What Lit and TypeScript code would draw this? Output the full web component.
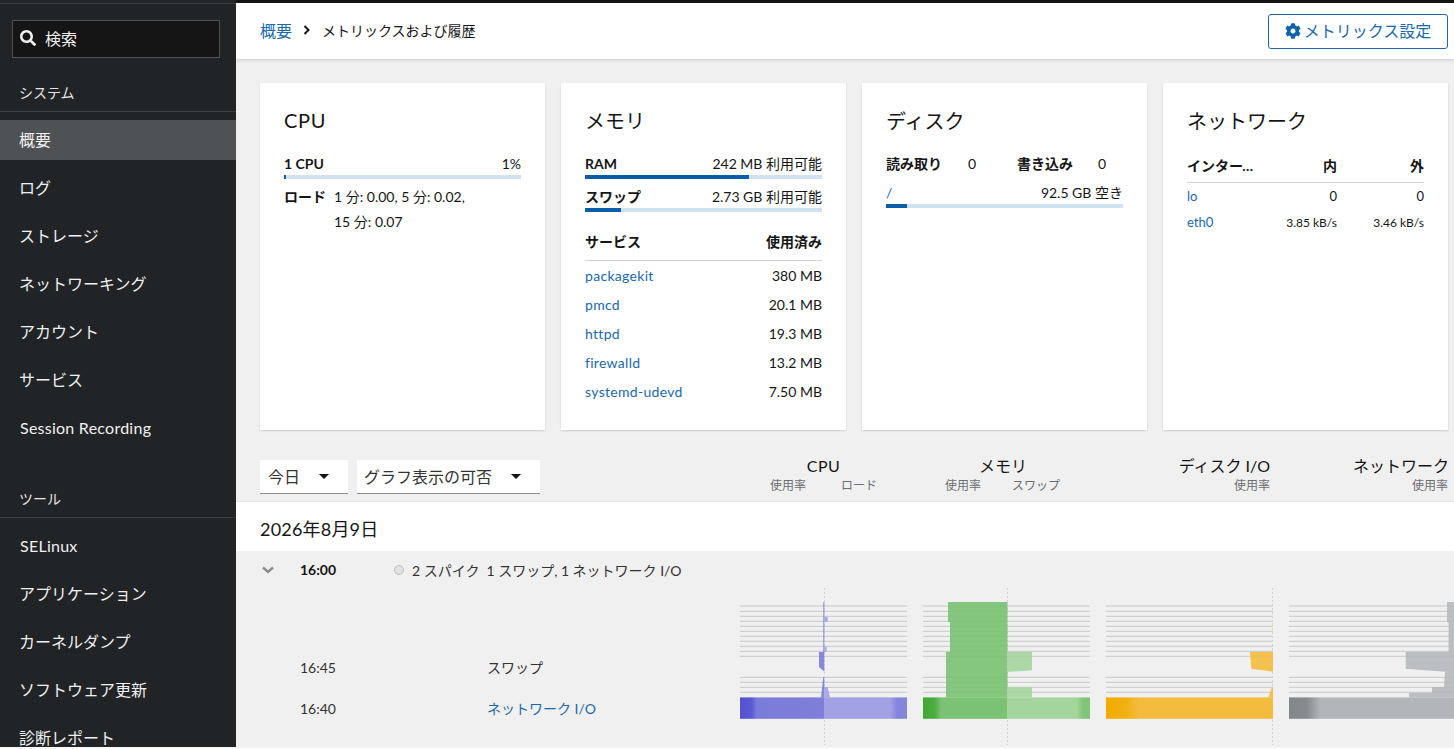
import { LitElement, html, css, svg } from "lit";
import { customElement } from "lit/decorators.js";

const GEAR = "M487.4 315.7l-42.6-24.6c4.3-23.2 4.3-47 0-70.2l42.6-24.6c4.9-2.8 7.1-8.6 5.5-14-11.1-35.6-30-67.8-54.7-94.6-3.8-4.1-10-5.1-14.8-2.3L380.8 110c-17.9-15.4-38.5-27.3-60.8-35.1V25.8c0-5.6-3.9-10.5-9.4-11.7-36.7-8.2-74.3-7.8-109.2 0-5.5 1.2-9.4 6.1-9.4 11.7V75c-22.2 7.9-42.8 19.8-60.8 35.1L88.7 85.5c-4.9-2.8-11-1.9-14.8 2.3-24.7 26.7-43.6 58.9-54.7 94.6-1.7 5.4.6 11.2 5.5 14L67.3 221c-4.3 23.2-4.3 47 0 70.2l-42.6 24.6c-4.9 2.8-7.1 8.6-5.5 14 11.1 35.6 30 67.8 54.7 94.6 3.8 4.1 10 5.1 14.8 2.3l42.6-24.6c17.9 15.4 38.5 27.3 60.8 35.1v49.2c0 5.6 3.9 10.5 9.4 11.7 36.7 8.2 74.3 7.8 109.2 0 5.5-1.2 9.4-6.1 9.4-11.7v-49.2c22.2-7.9 42.8-19.8 60.8-35.1l42.6 24.6c4.9 2.8 11 1.9 14.8-2.3 24.7-26.7 43.6-58.9 54.7-94.6 1.5-5.5-.7-11.3-5.6-14.1zM256 336c-44.1 0-80-35.9-80-80s35.9-80 80-80 80 35.9 80 80-35.9 80-80 80z";
const SEARCH = "M505 442.7L405.3 343c-4.5-4.5-10.6-7-17-7H372c27.6-35.3 44-79.7 44-128C416 93.1 322.9 0 208 0S0 93.1 0 208s93.1 208 208 208c48.3 0 92.7-16.4 128-44v16.3c0 6.4 2.5 12.5 7 17l99.7 99.7c9.4 9.4 24.6 9.4 33.9 0l28.3-28.3c9.4-9.4 9.4-24.6.1-34zM208 336c-70.7 0-128-57.2-128-128 0-70.7 57.2-128 128-128 70.7 0 128 57.2 128 128 0 70.7-57.2 128-128 128z";

const LINE_YS = [18, 23.3, 28.3, 33.3, 38.3, 43.3, 48.3, 53.3, 58.3, 63.3, 68.3, 89.3, 94.3, 99.3, 104.3];

interface Shape { d: string; fill: string; }
interface Stop { at: number; color: string; }
interface Chart {
  id: string;
  width: number;
  dash: number | null;
  shapes: Shape[];
  stops: Stop[];
}

const CHARTS: Chart[] = [
  {
    id: "cpu",
    width: 167,
    dash: 84.5,
    shapes: [
      { d: "M83.3 14H84.3V64H83.3ZM79 64H84.3V83.5L79 79ZM83.3 89H84.3V109.5H81Z", fill: "#7c7cd8" },
      { d: "M84.3 28.7H87.7V33.7H84.3ZM84.3 58.7H86.7V63.7H84.3ZM84.3 99H87.7L90 109.5H84.3Z", fill: "#a3a2e4" },
    ],
    stops: [
      { at: 0, color: "#5252d2" }, { at: 0.07, color: "#5a5ad4" }, { at: 0.1, color: "#7b7bd9" },
      { at: 0.503, color: "#7f7fd9" }, { at: 0.504, color: "#a2a1e4" }, { at: 0.9, color: "#a2a1e4" },
      { at: 0.94, color: "#8585dc" }, { at: 1, color: "#8585dc" },
    ],
  },
  {
    id: "mem",
    width: 167,
    dash: 84.5,
    shapes: [
      { d: "M25 14H84.5V109.5H23V64H27V34H25Z", fill: "#79c272" },
      { d: "M84.5 64H109V82.3L84.5 84ZM84.5 99.3H109V109.5H84.5Z", fill: "#a3d59c" },
    ],
    stops: [
      { at: 0, color: "#3fa832" }, { at: 0.07, color: "#4bac3f" }, { at: 0.11, color: "#7cc274" },
      { at: 0.503, color: "#7cc274" }, { at: 0.504, color: "#a3d59c" }, { at: 0.92, color: "#a3d59c" },
      { at: 0.96, color: "#80c578" }, { at: 1, color: "#80c578" },
    ],
  },
  {
    id: "disk",
    width: 167,
    dash: 166.5,
    shapes: [
      { d: "M144 64H167V83.7L145.3 80.7ZM165.7 99.7H167V109.5H162.3Z", fill: "#f4bb3d" },
      { d: "M166 35H167V39H166Z", fill: "#f4d67a" },
    ],
    stops: [
      { at: 0, color: "#f0ac00" }, { at: 0.12, color: "#f1b010" }, { at: 0.2, color: "#f4bc3f" }, { at: 1, color: "#f4bc3f" },
    ],
  },
  {
    id: "net",
    width: 165,
    dash: null,
    shapes: [
      { d: "M158 14H165V109.5H120V104.7H143V99H155L156 83.7L116.7 80.7V64H159.5V34H158Z", fill: "#b6b9bc" },
    ],
    stops: [
      { at: 0, color: "#84878a" }, { at: 0.11, color: "#888b8e" }, { at: 0.19, color: "#b3b6b9" }, { at: 1, color: "#b3b6b9" },
    ],
  },
];

const NAV_SYSTEM = ["概要", "ログ", "ストレージ", "ネットワーキング", "アカウント", "サービス"];
const NAV_TOOLS = ["アプリケーション", "カーネルダンプ", "ソフトウェア更新", "診断レポート"];
const SERVICES = [
  ["packagekit", "380 MB"], ["pmcd", "20.1 MB"], ["httpd", "19.3 MB"], ["firewalld", "13.2 MB"], ["systemd-udevd", "7.50 MB"],
];

function renderChart(c: Chart) {
  return html`<svg class="chart" width=${c.width} height="157" viewBox="0 0 ${c.width} 157">
    <defs>
      <linearGradient id="g-${c.id}">
        ${c.stops.map((s) => svg`<stop offset=${s.at} stop-color=${s.color}></stop>`)}
      </linearGradient>
    </defs>
    ${LINE_YS.map((y) => svg`<line x1="0" x2=${c.width} y1=${y} y2=${y} stroke="#c6c7c8" stroke-width="1"></line>`)}
    ${c.dash !== null
      ? svg`<line x1=${c.dash} x2=${c.dash} y1="0" y2="157" stroke="#d2d2d2" stroke-width="1" stroke-dasharray="2 2"></line>`
      : ""}
    ${c.shapes.map((s) => svg`<path d=${s.d} fill=${s.fill} fill-opacity="0.9"></path>`)}
    <rect x="0" y="109.4" width=${c.width} height="21.4" fill="url(#g-${c.id})"></rect>
  </svg>`;
}

@customElement("app-root")
export class AppRoot extends LitElement {
  static styles = css`
    :host {
      display: block;
      width: 1454px;
      height: 749px;
      overflow: hidden;
      background: #f8f8f8;
      font-family: "Lato", "Noto Sans CJK JP", sans-serif;
      font-size: 14px;
      color: #151515;
    }
    * { box-sizing: border-box; }
    a { color: #1b69ab; text-decoration: none; }
    .shell { display: flex; height: 747px; overflow: hidden; }

    .side {
      width: 236px; flex: none; background: #212427; color: #f0f0f0;
      overflow: hidden;
    }
    .side-top { height: 4px; border-bottom: 1px solid #3c3f42; }
    .search {
      margin: 16px 16px 0 12px; height: 38px; width: 208px;
      background: #151515; border: 1px solid #4f5255;
      display: flex; align-items: center; gap: 9px; padding: 0 0 2px 7px;
      font-size: 16px;
    }
    .search svg { fill: #f0f0f0; display: block; }
    .group { padding-left: 19px; display: flex; align-items: center; font-size: 14px; color: #e4e4e4; border-bottom: 1px solid #3c3f42; }
    .group.sys { margin-top: 16px; height: 38px; padding-bottom: 2px; }
    .group.tools { margin-top: 31px; height: 39px; padding-top: 1px; padding-bottom: 2px; }
    .items { display: flex; flex-direction: column; gap: 8px; padding-top: 8px; }
    .item { height: 40px; display: flex; align-items: center; padding: 0 0 2px 19px; font-size: 16px; color: #f0f0f0; }
    .item.on { background: #4f5255; }
    .item.latin { padding-left: 20px; letter-spacing: 0.25px; }

    .main { flex: 1; min-width: 0; display: flex; flex-direction: column; background: #f0f0f0; overflow: hidden; }
    .top-black { height: 3px; background: #151515; flex: none; }
    .head {
      height: 56px; flex: none; background: #fff; display: flex; align-items: center;
      padding: 0 6px 0 24px; box-shadow: 0 1px 4px rgba(0,0,0,.16); position: relative;
    }
    .crumb { display: flex; align-items: center; flex: 1; font-size: 14px; padding-bottom: 2px; }
    .crumb a { font-size: 16px; }
    .crumb svg { margin: 0 12px 0 11px; display: block; }
    .btn {
      width: 180px; height: 35px; border: 1px solid #1b69ab; border-radius: 3px;
      display: flex; align-items: center; justify-content: center; gap: 3px;
      color: #1b69ab; font-size: 16px; padding-bottom: 2px;
    }
    .btn svg { fill: #0f62ab; display: block; margin-top: 1px; }

    .cards {
      display: grid; grid-template-columns: repeat(4, 285px); gap: 16px;
      padding: 24px 6px 0 24px; flex: none;
    }
    .card { height: 347px; background: #fff; box-shadow: 0 1px 2px rgba(0,0,0,.14); padding: 24px; }
    .card h2 { margin: 0 0 20px; font-size: 20px; line-height: 28px; font-weight: 400; height: 28px; }
    .card h2.latin { letter-spacing: 0.7px; margin-top: -1px; margin-bottom: 21px; }
    .row { display: flex; justify-content: space-between; align-items: center; height: 20px; padding-bottom: 4px; }
    .b { font-weight: 700; }
    .bar { height: 4px; background: #d0e1f0; }
    .bar div { height: 100%; background: #0b5faa; }
    .bar-row + .bar-row { margin-top: 9px; }
    .load { display: flex; margin-top: 5px; line-height: 25px; }
    .load .b { width: 50px; flex: none; }
    .table-head { display: flex; justify-content: space-between; align-items: center; height: 20px; margin-top: 21px; padding-bottom: 4px; }
    .rule { height: 1px; background: #d2d2d2; margin-top: 7px; }
    .svc { display: flex; justify-content: space-between; align-items: center; height: 29px; }
    .svc a { letter-spacing: 0.3px; }

    .disk-top { display: flex; height: 20px; align-items: center; padding-bottom: 4px; }
    .disk-top span:nth-child(1) { width: 82px; }
    .disk-top span:nth-child(2) { width: 49px; }
    .disk-top span:nth-child(3) { width: 81px; }
    .disk-row { margin-top: 9px; }

    .net { display: grid; grid-template-columns: 1fr 84px 87px; align-items: center; }
    .net > * { text-align: right; }
    .net > :first-child { text-align: left; }
    .net-h { height: 20px; padding-bottom: 4px; }
    .net-r { height: 26px; font-size: 12px; }
    .net-r a { font-size: 13px; }
    .net-r .big { font-size: 13px; }
    .trunc { overflow: hidden; text-overflow: ellipsis; white-space: nowrap; width: 66px; }

    .bar-tools { display: flex; height: 46px; margin-top: 26px; padding-left: 24px; flex: none; width: 1218px; }
    .selects { width: 480px; flex: none; display: flex; gap: 9px; padding-top: 4px; align-items: flex-start; }
    .sel {
      height: 34px; background: #fff; border-bottom: 1px solid #8a8d90; display: flex; align-items: center;
      justify-content: space-between; font-size: 16px; padding: 0 19px 0 8px; color: #333;
    }
    .sel span { padding-bottom: 2px; }
    .sel.a { width: 88px; }
    .sel.b2 { width: 183px; padding-left: 7px; }
    .caret { width: 0; height: 0; border-left: 5px solid transparent; border-right: 5px solid transparent; border-top: 5px solid #151515; }
    .cols { display: flex; gap: 16px; }
    .col { width: 167px; flex: none; }
    .col .t { font-size: 16px; line-height: 20px; height: 20px; white-space: nowrap; }
    .col .s { font-size: 12px; line-height: 18px; color: #6a6e73; margin-top: 1px; display: flex; white-space: nowrap; }
    .col.cpu .t { text-align: center; letter-spacing: 0.5px; }
    .col.cpu .s { gap: 35px; padding-left: 30px; }
    .col.mem .t { text-align: center; padding-right: 7px; }
    .col.mem .s { gap: 31px; padding-left: 22px; }
    .col.dsk .t { text-align: right; padding-right: 3px; }
    .col.dsk .s { justify-content: flex-end; padding-right: 3px; }
    .col.ntw { width: 160px; }
    .col.ntw .t { text-align: right; }
    .col.ntw .s { justify-content: flex-end; padding-right: 1px; }

    .date {
      height: 49px; background: #fff; padding: 2px 0 0 24px; flex: none;
      display: flex; align-items: center; font-size: 18px; letter-spacing: 0.2px; box-shadow: 0 -1px 1px rgba(0,0,0,.05);
    }
    .hour { height: 37px; flex: none; display: flex; align-items: center; padding-left: 26px; color: #333; }
    .hour .chev { display: block; width: 38px; flex: none; }
    .hour .time { width: 94px; font-weight: 700; flex: none; color: #151515; }
    .hour .dot { width: 10px; height: 10px; border-radius: 50%; background: #e2e2e2; border: 1.5px solid #bcbdbe; flex: none; margin-right: 8px; }
    .hour .sum { margin-right: 7px; }

    .detail { display: flex; flex: 1; padding-left: 64px; }
    .labels { width: 440px; flex: none; padding-top: 59px; }
    .lab { height: 41px; display: grid; grid-template-columns: 187px 1fr; align-items: center; color: #333; }
    .lab > :nth-child(2) { padding-bottom: 2px; }
    .plots { display: flex; gap: 16px; }
    .chart { display: block; flex: none; }
  `;

  private bar(pct: number) {
    return html`<div class="bar"><div style="width:${pct}%"></div></div>`;
  }

  render() {
    return html`<div class="shell">
      <nav class="side">
        <div class="side-top"></div>
        <div class="search">
          <svg width="16" height="16" viewBox="0 0 512 512"><path d=${SEARCH}></path></svg>
          <span>検索</span>
        </div>
        <div class="group sys">システム</div>
        <div class="items">
          ${NAV_SYSTEM.map((n, i) => html`<div class="item ${i === 0 ? "on" : ""}">${n}</div>`)}
          <div class="item latin">Session Recording</div>
        </div>
        <div class="group tools">ツール</div>
        <div class="items">
          <div class="item latin">SELinux</div>
          ${NAV_TOOLS.map((n) => html`<div class="item">${n}</div>`)}
        </div>
      </nav>
      <main class="main">
        <div class="top-black"></div>
        <header class="head">
          <div class="crumb">
            <a href="#">概要</a>
            <svg width="7" height="10" viewBox="0 0 7 10"><path d="M1.5 1L5.5 5L1.5 9" fill="none" stroke="#151515" stroke-width="2"></path></svg>
            <span>メトリックスおよび履歴</span>
          </div>
          <div class="btn">
            <svg width="16" height="16" viewBox="0 0 512 512"><path d=${GEAR}></path></svg>
            <span>メトリックス設定</span>
          </div>
        </header>

        <section class="cards">
          <article class="card">
            <h2 class="latin">CPU</h2>
            <div class="row"><span class="b">1 CPU</span><span>1%</span></div>
            ${this.bar(1)}
            <div class="load">
              <span class="b">ロード</span>
              <span>1 分: 0.00, 5 分: 0.02,<br />15 分: 0.07</span>
            </div>
          </article>
          <article class="card">
            <h2>メモリ</h2>
            <div class="bar-row">
              <div class="row"><span class="b">RAM</span><span>242 MB 利用可能</span></div>
              ${this.bar(69)}
            </div>
            <div class="bar-row">
              <div class="row"><span class="b">スワップ</span><span>2.73 GB 利用可能</span></div>
              ${this.bar(15)}
            </div>
            <div class="table-head"><span class="b">サービス</span><span class="b">使用済み</span></div>
            <div class="rule"></div>
            <div>
              ${SERVICES.map(([n, v]) => html`<div class="svc"><a href="#">${n}</a><span>${v}</span></div>`)}
            </div>
          </article>
          <article class="card">
            <h2>ディスク</h2>
            <div class="disk-top">
              <span class="b">読み取り</span><span>0</span><span class="b">書き込み</span><span>0</span>
            </div>
            <div class="disk-row">
              <div class="row"><a href="#">/</a><span>92.5 GB 空き</span></div>
              ${this.bar(9)}
            </div>
          </article>
          <article class="card">
            <h2>ネットワーク</h2>
            <div class="net net-h"><span class="b trunc">インターフェース</span><span class="b">内</span><span class="b">外</span></div>
            <div class="rule"></div>
            <div class="net net-r"><a href="#">lo</a><span class="big">0</span><span class="big">0</span></div>
            <div class="net net-r"><a href="#">eth0</a><span>3.85 kB/s</span><span>3.46 kB/s</span></div>
          </article>
        </section>

        <div class="bar-tools">
          <div class="selects">
            <div class="sel a"><span>今日</span><i class="caret"></i></div>
            <div class="sel b2"><span>グラフ表示の可否</span><i class="caret"></i></div>
          </div>
          <div class="cols">
            <div class="col cpu"><div class="t">CPU</div><div class="s"><span>使用率</span><span>ロード</span></div></div>
            <div class="col mem"><div class="t">メモリ</div><div class="s"><span>使用率</span><span>スワップ</span></div></div>
            <div class="col dsk"><div class="t">ディスク I/O</div><div class="s"><span>使用率</span></div></div>
            <div class="col ntw"><div class="t">ネットワーク</div><div class="s"><span>使用率</span></div></div>
          </div>
        </div>

        <div class="date">2026年8月9日</div>

        <div class="hour">
          <svg class="chev" width="12" height="8" viewBox="0 0 38 8" preserveAspectRatio="xMinYMid meet"><path d="M1 1.5L6 6L11 1.5" fill="none" stroke="#8a8d90" stroke-width="2.4"></path></svg>
          <span class="time">16:00</span>
          <span class="dot"></span>
          <span class="sum">2 スパイク</span>
          <span>1 スワップ, 1 ネットワーク I/O</span>
        </div>

        <div class="detail">
          <div class="labels">
            <div class="lab"><span>16:45</span><span>スワップ</span></div>
            <div class="lab"><span>16:40</span><a href="#">ネットワーク I/O</a></div>
          </div>
          <div class="plots">${CHARTS.map(renderChart)}</div>
        </div>
      </main>
    </div>`;
  }
}
